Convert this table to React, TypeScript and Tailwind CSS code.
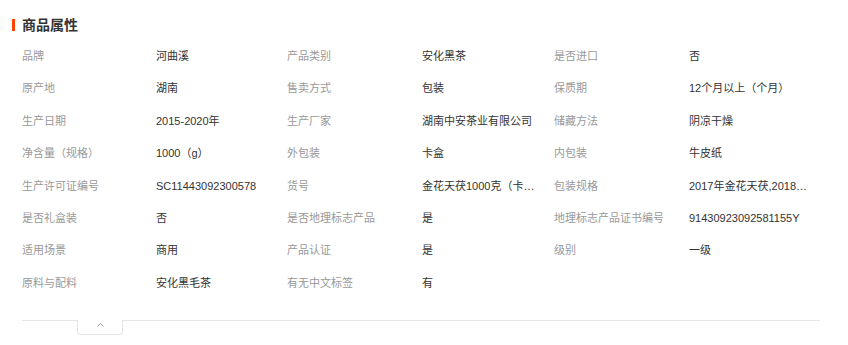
const rows: [string, string][][] = [
  [["品牌", "河曲溪"], ["产品类别", "安化黑茶"], ["是否进口", "否"]],
  [["原产地", "湖南"], ["售卖方式", "包装"], ["保质期", "12个月以上（个月）"]],
  [["生产日期", "2015-2020年"], ["生产厂家", "湖南中安茶业有限公司"], ["储藏方法", "阴凉干燥"]],
  [["净含量（规格）", "1000（g）"], ["外包装", "卡盒"], ["内包装", "牛皮纸"]],
  [["生产许可证编号", "SC11443092300578"], ["货号", "金花天茯1000克（卡盒装）"], ["包装规格", "2017年金花天茯,2018年金花天茯"]],
  [["是否礼盒装", "否"], ["是否地理标志产品", "是"], ["地理标志产品证书编号", "91430923092581155Y"]],
  [["适用场景", "商用"], ["产品认证", "是"], ["级别", "一级"]],
  [["原料与配料", "安化黑毛茶"], ["有无中文标签", "有"]],
];

export default function App() {
  return (
    <div
      className="w-[848px] h-[345px] bg-white text-[11px]"
      style={{ fontFamily: '"Liberation Sans", "Noto Sans CJK SC", sans-serif' }}
    >
      {/* Title */}
      <div className="flex items-center gap-[7px] pl-[12px] pt-[16px] h-[34px]">
        <span className="w-[3px] h-[12px] bg-[#ff4400]" />
        <h2 className="text-[14px] font-bold text-[#333] leading-none">商品属性</h2>
      </div>

      {/* Attributes */}
      <div className="px-[22px] pt-[6px]">
        {rows.map((row, i) => (
          <div key={i} className="grid grid-cols-[134px_131px_135px_132px_135px_131px] h-[32.4px] items-center">
            {row.map(([label, value]) => (
              <>
                <span key={label} className="text-[#999] whitespace-nowrap">{label}</span>
                <span key={label + "-v"} className="text-[#333] whitespace-nowrap truncate max-w-[118px]">
                  {value}
                </span>
              </>
            ))}
          </div>
        ))}
      </div>

      {/* Collapse */}
      <div className="ml-[22px] w-[798px] mt-[21px] border-t border-[#e5e5e5]">
        <button className="ml-[55px] -mt-px w-[46px] h-[15px] bg-white border border-t-0 border-[#e5e5e5] rounded-b-[4px] flex justify-center pt-[3px]">
          <svg width="7" height="4" viewBox="0 0 7 4" fill="none">
            <polyline points="0.5,3.5 3.5,0.5 6.5,3.5" stroke="#999" strokeWidth="1" />
          </svg>
        </button>
      </div>
    </div>
  );
}
